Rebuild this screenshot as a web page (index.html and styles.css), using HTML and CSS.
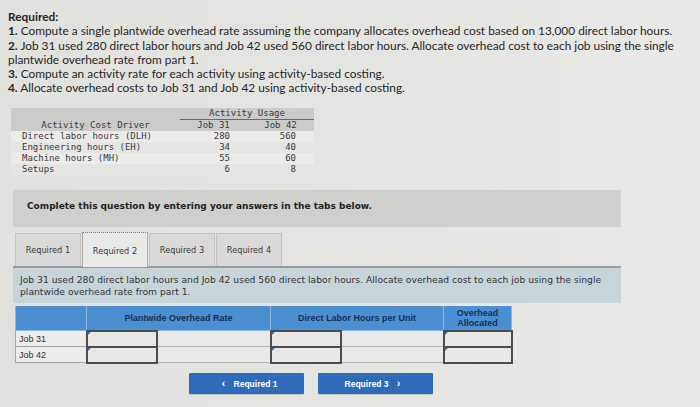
FILE: index.html
```html
<!DOCTYPE html>
<html>
<head>
<meta charset="utf-8">
<link rel="stylesheet" href="styles.css">
</head>
<body>
<div class="intro">
  <p class="req-title">Required:</p>
  <p><b>1.</b> Compute a single plantwide overhead rate assuming the company allocates overhead cost based on 13,000 direct labor hours.</p>
  <p><b>2.</b> <span>Job 31 used 280 direct labor hours and Job 42 used 560 direct labor hours. Allocate overhead cost to each job using the single</span><br><span>plantwide overhead rate from part 1.</span></p>
  <p><b>3.</b> Compute an activity rate for each activity using activity-based costing.</p>
  <p><b>4.</b> Allocate overhead costs to Job 31 and Job 42 using activity-based costing.</p>
</div>

<table class="usage">
  <thead>
    <tr><th></th><th colspan="2" class="usage-title">Activity Usage</th></tr>
    <tr><th class="driver-head">Activity Cost Driver</th><th class="job">Job 31</th><th class="job">Job 42</th></tr>
  </thead>
  <tbody>
    <tr><td class="lbl">Direct labor hours (DLH)</td><td class="n1">280</td><td class="n2">560</td></tr>
    <tr><td class="lbl">Engineering hours (EH)</td><td class="n1">34</td><td class="n2">40</td></tr>
    <tr><td class="lbl">Machine hours (MH)</td><td class="n1">55</td><td class="n2">60</td></tr>
    <tr><td class="lbl">Setups</td><td class="n1">6</td><td class="n2">8</td></tr>
  </tbody>
</table>

<div class="question">
  <div class="instruct">Complete this question by entering your answers in the tabs below.</div>
  <div class="tabs">
    <div class="tab">Required 1</div>
    <div class="tab active">Required 2</div>
    <div class="tab">Required 3</div>
    <div class="tab">Required 4</div>
  </div>
  <div class="panel">Job 31 used 280 direct labor hours and Job 42 used 560 direct labor hours. Allocate overhead cost to each job using the single plantwide overhead rate from part 1.</div>

  <table class="answer">
    <colgroup>
      <col class="c-lbl"><col class="c-a"><col class="c-b"><col class="c-a"><col class="c-d"><col class="c-e">
    </colgroup>
    <thead>
      <tr><th></th><th colspan="2">Plantwide Overhead Rate</th><th colspan="2">Direct Labor Hours per Unit</th><th>Overhead<br>Allocated</th></tr>
    </thead>
    <tbody>
      <tr><td class="rl">Job 31</td><td class="inp"></td><td class="fill"></td><td class="inp"></td><td class="fill"></td><td class="inp"></td></tr>
      <tr><td class="rl">Job 42</td><td class="inp"></td><td class="fill"></td><td class="inp"></td><td class="fill"></td><td class="inp"></td></tr>
    </tbody>
  </table>

  <div class="nav">
    <button class="btn"><span class="chev">&lsaquo;</span> Required 1</button>
    <button class="btn">Required 3 <span class="chev">&rsaquo;</span></button>
  </div>
</div>
</body>
</html>
```
FILE: styles.css
```css
html, body {
  margin: 0;
  padding: 0;
}
body {
  width: 700px;
  height: 407px;
  overflow: hidden;
  background: linear-gradient(90deg, #e1e1de 0%, #e5e5e2 60%, #e9e9e7 100%);
  color: #2a2a2a;
}
.intro {
  padding: 10px 0 0 8px;
  font-family: "Lato", "Liberation Sans", sans-serif;
  font-size: 11.85px;
  line-height: 14.3px;
  color: #262626;
}
.intro p {
  margin: 0;
  width: 690px;
}
.req-title {
  font-weight: bold;
}
.usage {
  margin: 12px 0 0 11px;
  border-collapse: collapse;
  font-family: "DejaVu Sans Mono", monospace;
  font-size: 9px;
  line-height: 11px;
  color: #3a3a3a;
}
.usage thead th {
  background: #cbcbc9;
  font-weight: normal;
  padding: 0;
  height: 11px;
}
.usage th.usage-title {
  border-bottom: 1px solid #6a6a6a;
}
.usage th.driver-head {
  width: 169px;
  text-align: center;
}
.usage th.job {
  width: 67px;
  text-align: center;
}
.usage td {
  padding: 0;
  height: 11px;
}
.usage tbody tr:nth-child(odd) td { background: #ebebe9; }
.usage tbody tr:nth-child(even) td { background: #e5e5e3; }
.usage td.lbl { padding-left: 11px; }
.usage td.n1 { text-align: right; padding-right: 17px; }
.usage td.n2 { text-align: right; padding-right: 18px; }

.question {
  margin: 15px 0 0 13px;
  width: 608px;
}
.instruct {
  background: #cfcfcc;
  height: 37px;
  line-height: 33px;
  padding-left: 14px;
  font-family: "DejaVu Sans", sans-serif;
  font-weight: bold;
  font-size: 9px;
  color: #222;
}
.tabs {
  display: flex;
  margin: 6px 0 0 2px;
  gap: 1px;
}
.tab {
  width: 64px;
  height: 32px;
  line-height: 32px;
  text-align: center;
  background: #d9d9d7;
  border: 1px solid #c3c3c1;
  border-bottom: none;
  font-family: "DejaVu Sans", sans-serif;
  font-size: 8.2px;
  color: #3a3a3a;
}
.tab.active {
  background: #e9e9e7;
  border-top: 1px dotted #777;
  border-left: 1px solid #aaa;
  border-right: 1px solid #aaa;
  height: 34px;
  margin-top: -1px;
  margin-bottom: -1px;
  line-height: 36px;
}
.panel {
  background: #c7d5db;
  border-top: 2px solid #8f9ea6;
  padding: 6px 8px 5px 7px;
  font-family: "DejaVu Sans", sans-serif;
  font-size: 9.2px;
  line-height: 12px;
  color: #333;
  height: 24px;
}
.answer {
  margin: 3px 0 0 2px;
  border-collapse: collapse;
  table-layout: fixed;
  font-family: "Liberation Sans", Arial, sans-serif;
  font-size: 9px;
}
.answer col.c-lbl { width: 71px; }
.answer col.c-a { width: 70px; }
.answer col.c-b { width: 114px; }
.answer col.c-d { width: 103px; }
.answer col.c-e { width: 68px; }
.answer th {
  background: #4b8fd3;
  color: #16304f;
  font-weight: bold;
  height: 24px;
  padding: 0;
  line-height: 10px;
  border: 1px solid #8fb6df;
  border-top: none;
}
.answer td {
  height: 14px;
  padding: 0;
  border: 1px solid #a5a5a5;
}
.answer td.rl {
  background: #ececea;
  padding-left: 3px;
  color: #333;
}
.answer td.inp {
  background: #e8e8e6;
  border: 2px solid #4d4d4d;
  position: relative;
}
.answer td.inp::before {
  content: "";
  position: absolute;
  left: 0;
  top: 0;
  width: 0;
  height: 0;
  border-top: 3px solid #3a6fb0;
  border-right: 3px solid transparent;
}
.answer td.fill {
  background: #e9e9e7;
  border: 1px solid #b5b5b5;
}
.nav {
  display: flex;
  gap: 14px;
  margin: 9px 0 0 176px;
}
.btn {
  width: 115px;
  height: 21px;
  background: #2e6cb9;
  border: none;
  border-radius: 1px;
  color: #fff;
  font-family: "Liberation Sans", Arial, sans-serif;
  font-weight: bold;
  font-size: 8.5px;
  padding: 0;
  box-shadow: 0 1px 1px rgba(0,0,0,0.15);
}
.chev {
  font-size: 11px;
  margin: 0 6px;
  position: relative;
  top: 0;
}
```
